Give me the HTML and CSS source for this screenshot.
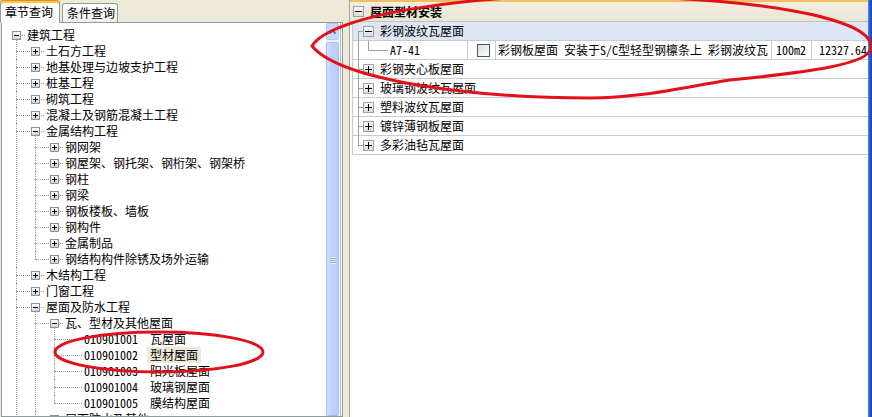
FILE: index.html
```html
<!DOCTYPE html>
<html lang="zh-CN">
<head>
    <meta charset="UTF-8">
    <title>定额查询</title>
    <link rel="stylesheet" href="styles.css">
</head>
<body>
<div class="app">
    <!-- left: chapter tree -->
    <div class="left">
        <div class="tabs">
            <div class="tab on">章节查询</div>
            <div class="tab">条件查询</div>
        </div>
        <div class="panel">
            <div class="tree-wrap">
                <ul class="tree">
                    <li><div class="row"><i class="box minus"></i><span>建筑工程</span></div>
                        <ul>
                            <li><div class="row"><i class="box plus"></i><span>土石方工程</span></div></li>
                            <li><div class="row"><i class="box plus"></i><span>地基处理与边坡支护工程</span></div></li>
                            <li><div class="row"><i class="box plus"></i><span>桩基工程</span></div></li>
                            <li><div class="row"><i class="box plus"></i><span>砌筑工程</span></div></li>
                            <li><div class="row"><i class="box plus"></i><span>混凝土及钢筋混凝土工程</span></div></li>
                            <li><div class="row"><i class="box minus"></i><span>金属结构工程</span></div>
                                <ul>
                                    <li><div class="row"><i class="box plus"></i><span>钢网架</span></div></li>
                                    <li><div class="row"><i class="box plus"></i><span>钢屋架、钢托架、钢桁架、钢架桥</span></div></li>
                                    <li><div class="row"><i class="box plus"></i><span>钢柱</span></div></li>
                                    <li><div class="row"><i class="box plus"></i><span>钢梁</span></div></li>
                                    <li><div class="row"><i class="box plus"></i><span>钢板楼板、墙板</span></div></li>
                                    <li><div class="row"><i class="box plus"></i><span>钢构件</span></div></li>
                                    <li><div class="row"><i class="box plus"></i><span>金属制品</span></div></li>
                                    <li><div class="row"><i class="box plus"></i><span>钢结构构件除锈及场外运输</span></div></li>
                                </ul>
                            </li>
                            <li><div class="row"><i class="box plus"></i><span>木结构工程</span></div></li>
                            <li><div class="row"><i class="box plus"></i><span>门窗工程</span></div></li>
                            <li><div class="row"><i class="box minus"></i><span>屋面及防水工程</span></div>
                                <ul>
                                    <li><div class="row"><i class="box minus"></i><span>瓦、型材及其他屋面</span></div>
                                        <ul>
                                            <li><div class="row leaf"><span class="code">010901001</span><span class="name">瓦屋面</span></div></li>
                                            <li><div class="row leaf"><span class="code">010901002</span><span class="name sel">型材屋面</span></div></li>
                                            <li><div class="row leaf"><span class="code">010901003</span><span class="name">阳光板屋面</span></div></li>
                                            <li><div class="row leaf"><span class="code">010901004</span><span class="name">玻璃钢屋面</span></div></li>
                                            <li><div class="row leaf"><span class="code">010901005</span><span class="name">膜结构屋面</span></div></li>
                                        </ul>
                                    </li>
                                    <li><div class="row"><i class="box plus"></i><span>屋面防水及其他</span></div></li>
                                    <li><div class="row"><i class="box plus"></i><span>墙面防水、防潮</span></div></li>
                                </ul>
                            </li>
                            <li><div class="row"><i class="box plus"></i><span>保温、隔热、防腐工程</span></div></li>
                        </ul>
                    </li>
                </ul>
            </div>
            <div class="vscroll">
                <div class="sb-up">
                    <svg width="7" height="5" viewBox="0 0 7 5"><polyline points="0.5,4.5 3.5,1.5 6.5,4.5" fill="none" stroke="#4D6185" stroke-width="1.6"/></svg>
                </div>
                <div class="sb-thumb"><span class="grip"></span></div>
            </div>
            <div class="edge"></div>
        </div>
    </div>

    <div class="split"></div>

    <!-- right: quota list -->
    <div class="right">
        <div class="rhead"><i class="pbox minus"></i><b>屋面型材安装</b></div>
        <div class="rows">
            <div class="grp open"><i class="stub"></i><i class="pbox minus"></i><span>彩钢波纹瓦屋面</span></div>
            <div class="item">
                <div class="cell c1"><i class="elbow"></i><span>A7-41</span></div>
                <div class="cell c2"><i class="chk"></i></div>
                <div class="cell c3">彩钢板屋面 安装于S/C型轻型钢檩条上 彩钢波纹瓦</div>
                <div class="cell c4">100m2</div>
                <div class="cell c5">12327.64</div>
            </div>
            <div class="grp"><i class="stub"></i><i class="pbox plus"></i><span>彩钢夹心板屋面</span></div>
            <div class="grp"><i class="stub"></i><i class="pbox plus"></i><span>玻璃钢波纹瓦屋面</span></div>
            <div class="grp"><i class="stub"></i><i class="pbox plus"></i><span>塑料波纹瓦屋面</span></div>
            <div class="grp"><i class="stub"></i><i class="pbox plus"></i><span>镀锌薄钢板屋面</span></div>
            <div class="grp"><i class="stub"></i><i class="pbox plus"></i><span>多彩油毡瓦屋面</span></div>
        </div>
    </div>

    <div class="frame"></div>

    <!-- hand drawn red marks -->
    <svg class="marks" width="872" height="417" viewBox="0 0 872 417">
        <path d="M312 46 C330 15 470 -6 600 -4 C760 -2 874 18 871 48 C870 64 810 72 730 80 C680 88 640 98 590 98 C470 98 340 80 312 46 Z" fill="none" stroke="#E3101A" stroke-width="3"/>
        <ellipse cx="159" cy="352" rx="104" ry="20" fill="none" stroke="#E3101A" stroke-width="3"/>
    </svg>
</div>
</body>
</html>
```

FILE: styles.css
```css
body {
    margin: 0;
    background-color: #ECE9D8;
    font: 12px/16px "Noto Sans Mono CJK SC", "Noto Sans CJK SC", monospace;
    color: #000;
    overflow: hidden;
}

.app {
    display: flex;
    width: 872px;
    height: 417px;
    position: relative;
}

/* left pane */
.left {
    width: 343px;
    display: flex;
    flex-direction: column;
}

.tabs {
    height: 22px;
    display: flex;
    align-items: flex-end;
    position: relative;
    z-index: 1;
}

.tab {
    box-sizing: border-box;
    width: 56px;
    height: 19px;
    margin-left: 2px;
    padding: 0 4px;
    border: 1px solid #919B9C;
    border-bottom: none;
    border-radius: 3px 3px 0 0;
    background: linear-gradient(#FFFFFF, #F0EFE9);
    line-height: 18px;
    white-space: nowrap;
}

.tab.on {
    width: 60px;
    height: 23px;
    margin: 0 0 -1px 0;
    padding: 0 4px;
    border-top-color: #E68B2C;
    background: #FCFCFE;
    box-shadow: inset 0 2px 0 #FFC73C;
    line-height: 22px;
}

.panel {
    flex: 1;
    min-height: 0;
    display: flex;
    margin-left: 1px;
    border: 1px solid #919B9C;
    border-right: none;
    background: #fff;
}

.tree-wrap {
    flex: 1;
    overflow: hidden;
    padding-top: 4px;
}

/* tree */
.tree, .tree ul {
    list-style: none;
    margin: 0;
    padding: 0;
}

.tree {
    padding-left: 10px;
}

.tree ul {
    padding-left: 19px;
}

.tree li {
    position: relative;
}

.tree li::after {
    content: "";
    position: absolute;
    left: -15px;
    top: 8px;
    width: 28px;
    border-top: 1px dotted #9A9A9A;
}

.tree > li::after {
    left: 4px;
    width: 9px;
}

.tree ul > li::before {
    content: "";
    position: absolute;
    left: -15px;
    top: 0;
    bottom: 0;
    border-left: 1px dotted #9A9A9A;
}

.tree ul > li:first-child::before {
    top: -4px;
}

.tree ul > li:last-child::before {
    bottom: auto;
    height: 8px;
}

.tree ul > li:first-child:last-child::before {
    height: 12px;
}

.row {
    display: flex;
    align-items: center;
    height: 16px;
    white-space: nowrap;
}

.leaf {
    padding-left: 15px;
}

.box {
    flex: none;
    width: 9px;
    height: 9px;
    box-sizing: border-box;
    margin-right: 6px;
    border: 1px solid #8592A6;
    position: relative;
    z-index: 1;
    background: linear-gradient(#FFFFFF, #D9D6CA);
}

.box.minus {
    background: linear-gradient(#000, #000) center / 5px 1px no-repeat,
                linear-gradient(#FFFFFF, #D9D6CA);
}

.box.plus {
    background: linear-gradient(#000, #000) center / 5px 1px no-repeat,
                linear-gradient(#000, #000) center / 1px 5px no-repeat,
                linear-gradient(#FFFFFF, #D9D6CA);
}

.name {
    margin-left: 9px;
    padding: 0 3px;
}

.name.sel {
    background: #ECE9D8;
}

/* scrollbar */
.vscroll {
    width: 13px;
    display: flex;
    flex-direction: column;
    background: #F3F1EC;
}

.sb-up {
    height: 17px;
    box-sizing: border-box;
    border: 1px solid #B4C8F6;
    border-radius: 2px;
    background: #C7D7FD;
    display: flex;
    align-items: center;
    justify-content: center;
}

.sb-thumb {
    flex: 1;
    margin-top: 2px;
    box-sizing: border-box;
    padding-top: 214px;
    border: 1px solid #A9BEEE;
    border-radius: 2px;
    background: linear-gradient(to right, #D2DEFE, #BFD1FB 40%, #B9CCF8);
    display: flex;
    justify-content: center;
}

.grip {
    width: 6px;
    height: 7px;
    background: repeating-linear-gradient(#EEF3FE 0 1px, #8CA6DD 1px 2px);
}

.edge {
    width: 4px;
    background: linear-gradient(to right, #fff 0 1px, #A8B6D0 1px 2px, #fff 2px 3px, #919B9C 3px 4px);
}

.split {
    width: 6px;
}

/* right pane */
.right {
    width: 519px;
    box-sizing: border-box;
    border-left: 1px solid #A5A297;
    background: #fff;
}

.rhead {
    height: 22px;
    box-sizing: border-box;
    padding: 2px 0 0 3px;
    border-bottom: 1px solid #C5C2B2;
    background: linear-gradient(#F3BE5C 0 2px, #F1EEE2 2px, #EAE6D5);
    display: flex;
    align-items: center;
}

.rhead b {
    font-weight: bold;
}

.pbox {
    flex: none;
    width: 11px;
    height: 11px;
    box-sizing: border-box;
    margin-right: 6px;
    border: 1px solid #A0A0A0;
    background: linear-gradient(#FAFAFA, #DCDCDC);
}

.pbox.minus {
    background: linear-gradient(#000, #000) center / 7px 1px no-repeat,
                linear-gradient(#FAFAFA, #DCDCDC);
}

.pbox.plus {
    background: linear-gradient(#000, #000) center / 7px 1px no-repeat,
                linear-gradient(#000, #000) center / 1px 7px no-repeat,
                linear-gradient(#FAFAFA, #DCDCDC);
}

.rows {
    margin-left: 2px;
    border-left: 1px solid #C8C8C8;
    position: relative;
}

.rows::before {
    content: "";
    position: absolute;
    left: 5px;
    top: 9px;
    bottom: 10px;
    border-left: 1px solid #A0A0A0;
}

.grp {
    height: 19px;
    box-sizing: border-box;
    border-bottom: 1px solid #CBCBCB;
    display: flex;
    align-items: center;
    white-space: nowrap;
}

.grp.open {
    background: #DDE6F5;
}

.stub {
    width: 5px;
    height: 1px;
    margin-left: 5px;
    background: #A0A0A0;
}

.item {
    height: 19px;
    box-sizing: border-box;
    border-bottom: 1px solid #CBCBCB;
    display: flex;
}

.cell {
    box-sizing: border-box;
    border-right: 1px solid #CBCBCB;
    display: flex;
    align-items: center;
    white-space: nowrap;
    overflow: hidden;
}

.c1 { width: 115px; }
.c2 { width: 28px; padding-left: 9px; }
.c3 { width: 276px; padding-left: 2px; }
.c4 { width: 40px; padding-left: 4px; }
.c5 { flex: 1; justify-content: flex-end; padding-right: 1px; border-right: none; }

.elbow {
    align-self: flex-start;
    width: 19px;
    height: 9px;
    margin: 0 2px 0 15px;
    border-left: 1px solid #A0A0A0;
    border-bottom: 1px solid #A0A0A0;
}

.chk {
    width: 13px;
    height: 13px;
    box-sizing: border-box;
    border: 1px solid #3D5A80;
    background: linear-gradient(135deg, #DCDCD7, #FFFFFF);
}

.frame {
    width: 4px;
    background: linear-gradient(to right, #5B86E5, #2358D2 50%, #1941B5);
}

.marks {
    position: absolute;
    left: 0;
    top: 0;
    pointer-events: none;
}
```
